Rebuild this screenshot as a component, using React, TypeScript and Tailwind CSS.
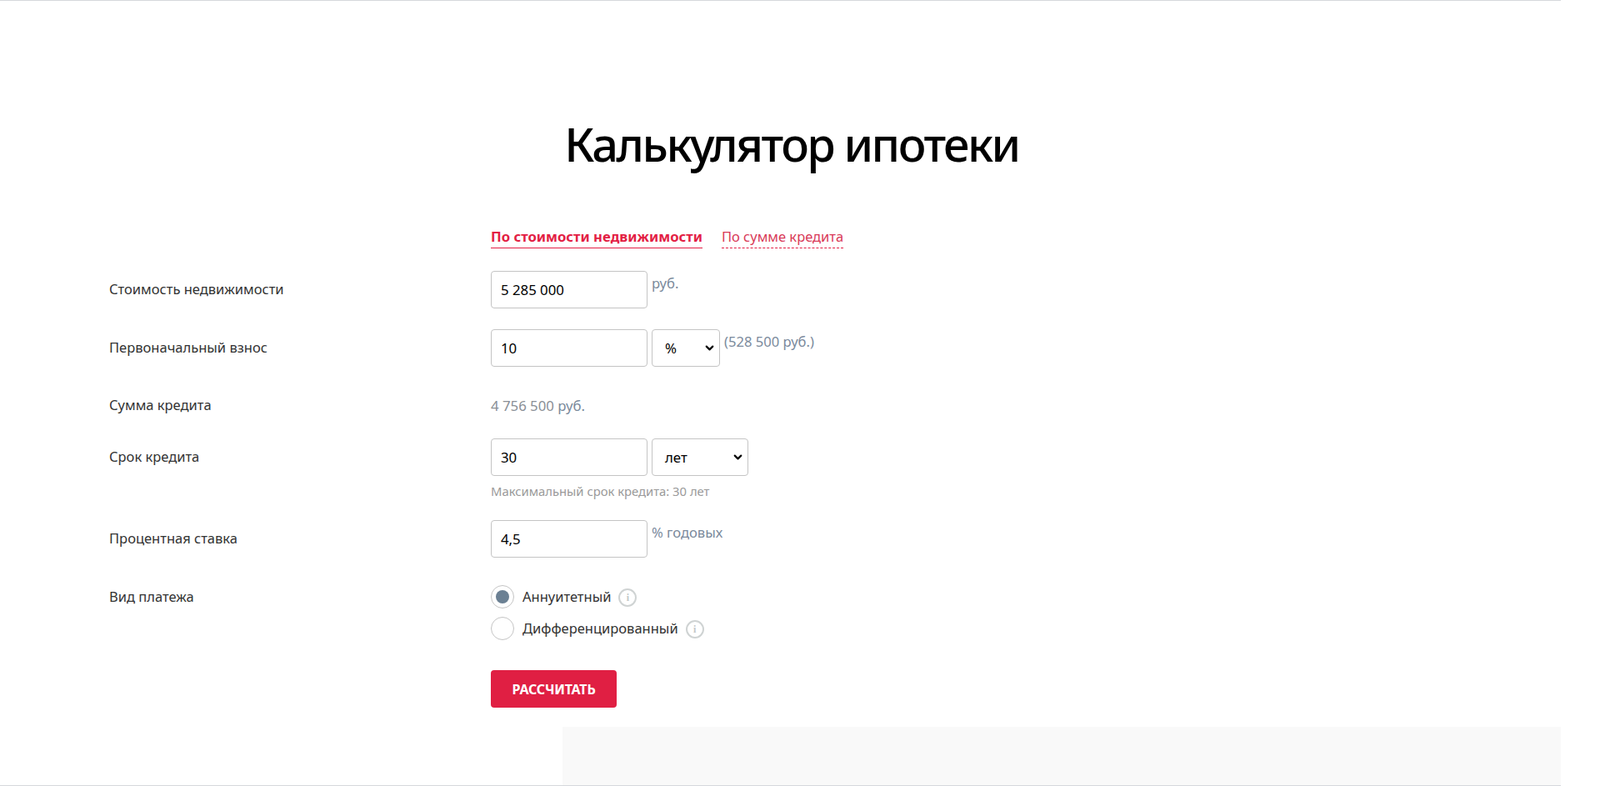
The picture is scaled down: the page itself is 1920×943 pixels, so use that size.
import { ChevronDown } from "lucide-react";

const fieldClass =
  "h-[45px] w-[188px] rounded-[4px] border border-[#c4c4c4] bg-white px-[11px] text-[16.8px] text-black outline-none";

function Label({ children }: { children: React.ReactNode }) {
  return <div className="text-[16.5px] leading-[22px] text-[#333]">{children}</div>;
}

function Unit({ children }: { children: React.ReactNode }) {
  return <span className="ml-[5px] pt-[4px] text-[16.6px] leading-[22px] text-[#7b8a9c]">{children}</span>;
}

function FakeSelect({ value, width }: { value: string; width: string }) {
  return (
    <div className={`ml-[5px] flex h-[45px] items-center justify-between rounded-[4px] border border-[#c4c4c4] bg-white pl-[15px] pr-[4px] text-[16.8px] text-black ${width}`}>
      <span>{value}</span>
      <ChevronDown className="h-[15px] w-[15px]" strokeWidth={3.5} />
    </div>
  );
}

function InfoIcon() {
  return (
    <span className="ml-[9px] mt-[2px] flex h-[22px] w-[22px] items-center justify-center rounded-full border-2 border-[#cfd3d3] font-['Liberation_Serif',serif] text-[12px] font-bold leading-none text-[#c4c8c8]">
      i
    </span>
  );
}

function Radio({ checked, label }: { checked?: boolean; label: string }) {
  return (
    <div className="flex h-[28px] items-center">
      <span className="flex h-[28px] w-[28px] items-center justify-center rounded-full border border-[#c4c4c4] bg-white">
        {checked && <span className="h-[16px] w-[16px] rounded-full bg-[#6b8093]" />}
      </span>
      <span className="ml-[10px] text-[16.5px] leading-[22px] text-[#333]">{label}</span>
      <InfoIcon />
    </div>
  );
}

export default function App() {
  return (
    <div className="h-screen overflow-hidden bg-white font-['Noto_Sans','Open_Sans',sans-serif]">
      <main className="flex h-full w-[1873px] flex-col border-y border-[#d5d8dc]">
        <h1 className="ml-[27px] mt-[133px] text-center text-[56px] font-medium leading-[76px] tracking-[-2.5px] text-black">
          Калькулятор ипотеки
        </h1>

        <div className="mt-[61px] pl-[131px]">
          {/* Tabs */}
          <div className="flex pl-[458px]">
            <span className="border-b border-[#e31e44] text-[16.7px] font-bold leading-[26px] text-[#e31e44]">
              По стоимости недвижимости
            </span>
            <span className="ml-[23px] border-b border-dashed border-[#e31e44] text-[16.5px] leading-[26px] text-[#d93a58]">
              По сумме кредита
            </span>
          </div>

          <div className="mt-[27px] grid grid-cols-[458px_1fr] items-start">
            <div className="pt-[11px]"><Label>Стоимость недвижимости</Label></div>
            <div className="flex items-start">
              <input className={fieldClass} defaultValue="5 285 000" />
              <Unit>руб.</Unit>
            </div>
          </div>

          <div className="mt-[25px] grid grid-cols-[458px_1fr] items-start">
            <div className="pt-[11px]"><Label>Первоначальный взнос</Label></div>
            <div className="flex items-start">
              <input className={fieldClass} defaultValue="10" />
              <FakeSelect value="%" width="w-[82px]" />
              <Unit>(528 500 руб.)</Unit>
            </div>
          </div>

          <div className="mt-[35px] grid grid-cols-[458px_1fr] items-start">
            <Label>Сумма кредита</Label>
            <div className="pt-[1px] text-[16.8px] leading-[22px] text-[#7b8a9c]">
              <span className="text-[#8a8f96]">4 756 500</span> руб.
            </div>
          </div>

          <div className="mt-[28px] grid grid-cols-[458px_1fr] items-start">
            <div className="pt-[11px]"><Label>Срок кредита</Label></div>
            <div>
              <div className="flex items-start">
                <input className={fieldClass} defaultValue="30" />
                <FakeSelect value="лет" width="w-[116px]" />
              </div>
              <div className="mt-[8px] text-[14.8px] leading-[20px] text-[#9a9a9a]">
                Максимальный срок кредита: 30 лет
              </div>
            </div>
          </div>

          <div className="mt-[25px] grid grid-cols-[458px_1fr] items-start">
            <div className="pt-[11px]"><Label>Процентная ставка</Label></div>
            <div className="flex items-start">
              <input className={fieldClass} defaultValue="4,5" />
              <Unit>% годовых</Unit>
            </div>
          </div>

          <div className="mt-[33px] grid grid-cols-[458px_1fr] items-start">
            <div className="pt-[3px]"><Label>Вид платежа</Label></div>
            <div className="flex flex-col gap-[10px]">
              <Radio checked label="Аннуитетный" />
              <Radio label="Дифференцированный" />
            </div>
          </div>

          <div className="mt-[36px] pl-[458px]">
            <button
              type="button"
              className="h-[45px] w-[151px] rounded-[4px] bg-[#e01f43] text-[16px] font-bold uppercase tracking-[-0.2px] text-white"
            >
              Рассчитать
            </button>
          </div>
        </div>

        <div className="mt-auto flex justify-end">
          <div className="h-[70px] w-[1198px] bg-[#f9f9f9]" />
        </div>
      </main>
    </div>
  );
}
